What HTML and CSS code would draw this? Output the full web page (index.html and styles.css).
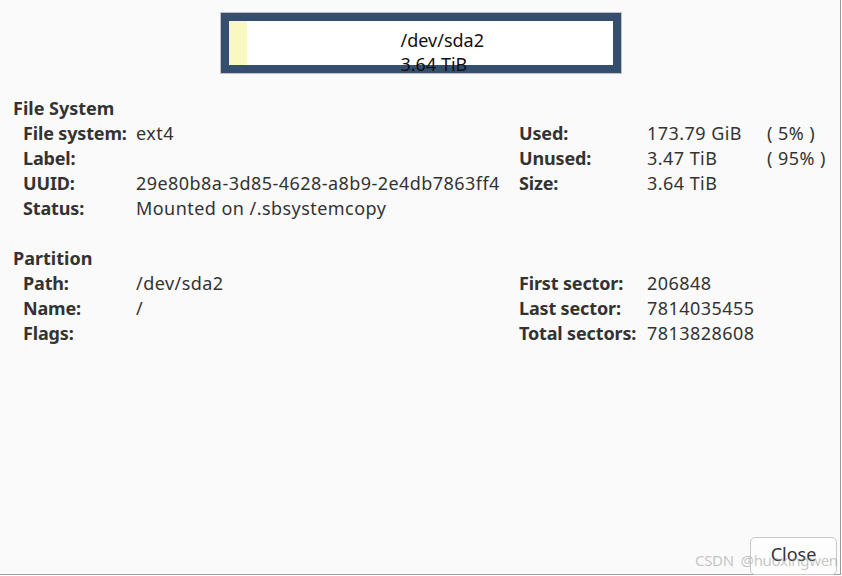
FILE: index.html
```html
<!DOCTYPE html>
<html>
<head>
<meta charset="utf-8">
<link rel="stylesheet" href="styles.css">
</head>
<body>
<div class="frame">
  <div class="bar-wrap">
    <div class="bar">
      <div class="used"></div>
      <div class="bar-text">
        <div>/dev/sda2</div>
        <div>3.64 TiB</div>
      </div>
    </div>
  </div>

  <div class="section">
    <div class="heading">File System</div>
    <div class="grid">
      <div class="lbl">File system:</div><div class="val">ext4</div><div class="lbl">Used:</div><div class="val">173.79 GiB</div><div class="val pct">( 5% )</div>
      <div class="lbl">Label:</div><div class="val"></div><div class="lbl">Unused:</div><div class="val">3.47 TiB</div><div class="val pct">( 95% )</div>
      <div class="lbl">UUID:</div><div class="val">29e80b8a-3d85-4628-a8b9-2e4db7863ff4</div><div class="lbl">Size:</div><div class="val">3.64 TiB</div><div class="val pct"></div>
      <div class="lbl">Status:</div><div class="val">Mounted on /.sbsystemcopy</div><div class="lbl"></div><div class="val"></div><div class="val pct"></div>
    </div>
  </div>

  <div class="section">
    <div class="heading">Partition</div>
    <div class="grid">
      <div class="lbl">Path:</div><div class="val">/dev/sda2</div><div class="lbl">First sector:</div><div class="val">206848</div><div class="val pct"></div>
      <div class="lbl">Name:</div><div class="val">/</div><div class="lbl">Last sector:</div><div class="val">7814035455</div><div class="val pct"></div>
      <div class="lbl">Flags:</div><div class="val"></div><div class="lbl">Total sectors:</div><div class="val">7813828608</div><div class="val pct"></div>
    </div>
  </div>

  <div class="footer">
    <button class="close">Close</button>
  </div>
  <div class="watermark">CSDN @huoxingwen</div>
</div>
</body>
</html>
```

FILE: styles.css
```css
html, body {
  margin: 0;
  padding: 0;
  background: #ffffff;
}
body {
  width: 842px;
  height: 576px;
  overflow: hidden;
  font-family: "Noto Sans", "Open Sans", sans-serif;
  color: #333333;
}
.frame {
  position: relative;
  box-sizing: border-box;
  width: 841px;
  height: 575px;
  background: #fafafa;
  border-right: 1px solid #9a9a9a;
  border-bottom: 1px solid #a0a0a0;
  display: flex;
  flex-direction: column;
  padding-top: 12px;
}
.bar-wrap {
  display: flex;
  justify-content: center;
  padding-left: 1px;
}
.bar {
  box-sizing: border-box;
  width: 402px;
  height: 62px;
  border: 1px solid #c2c2c2;
  background: #ffffff;
  box-shadow: inset 0 0 0 8px #344f6d;
  display: flex;
  padding: 8px;
}
.used {
  width: 18px;
  height: 44px;
  background: #f8f8c0;
  flex: none;
}
.bar-text {
  padding-left: 154px;
  padding-top: 7px;
  font-size: 18px;
  line-height: 24px;
  color: #111111;
  position: relative;
  z-index: 1;
}
.section {
  padding-left: 13px;
  font-size: 18px;
  line-height: 25px;
}
.bar-wrap + .section {
  margin-top: 22px;
}
.section + .section {
  margin-top: 25px;
}
.heading {
  font-weight: bold;
}
.grid {
  display: grid;
  grid-template-columns: 113px 383px 128px 120px auto;
  padding-left: 10px;
}
.lbl {
  font-weight: bold;
  white-space: nowrap;
  letter-spacing: -0.15px;
}
.val {
  white-space: nowrap;
  min-height: 25px;
  letter-spacing: 0.45px;
}
.footer {
  margin-top: auto;
  display: flex;
  justify-content: flex-end;
  padding-right: 3px;
}
.close {
  box-sizing: border-box;
  width: 87px;
  height: 38px;
  margin-bottom: -1px;
  border: 1px solid #c8c8c8;
  border-radius: 5px;
  background: #fdfdfd;
  font-family: "Noto Sans", "Open Sans", sans-serif;
  font-size: 18px;
  color: #333333;
  padding: 0 0 4px 0;
}
.watermark {
  position: absolute;
  left: 695px;
  top: 550px;
  font-family: "Noto Sans", sans-serif;
  font-size: 15px;
  letter-spacing: -0.3px;
  color: rgba(150, 150, 150, 0.55);
  word-spacing: 3px;
  pointer-events: none;
}
```
